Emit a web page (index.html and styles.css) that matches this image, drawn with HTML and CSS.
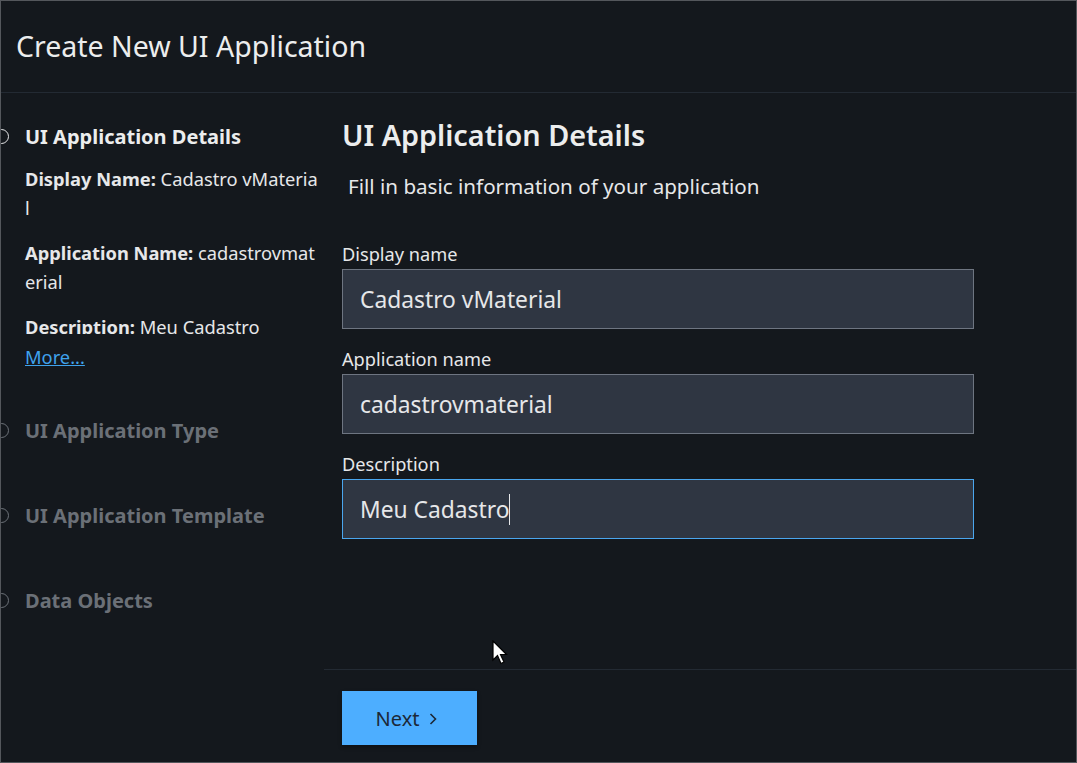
FILE: index.html
```html
<!DOCTYPE html>
<html lang="en">
<head>
    <meta charset="UTF-8">
    <title>Create New UI Application</title>
    <link rel="stylesheet" href="styles.css">
</head>
<body>
    <div class="dialog">
        <header class="dialog-header">
            <h1 class="dialog-title">Create New UI Application</h1>
        </header>

        <div class="dialog-body">
            <aside class="steps">
                <div class="step active">
                    <div class="step-head">
                        <span class="step-ring"></span>
                        <span class="step-title">UI Application Details</span>
                    </div>
                    <div class="step-summary">
                        <p class="summary-item"><b>Display Name:</b> Cadastro vMaterial</p>
                        <p class="summary-item"><b>Application Name:</b> cadastrovmaterial</p>
                        <p class="summary-item clipped"><b>Description:</b> Meu Cadastro</p>
                    </div>
                    <a href="#" class="more-link">More...</a>
                </div>
                <div class="step">
                    <div class="step-head">
                        <span class="step-ring"></span>
                        <span class="step-title">UI Application Type</span>
                    </div>
                </div>
                <div class="step">
                    <div class="step-head">
                        <span class="step-ring"></span>
                        <span class="step-title">UI Application Template</span>
                    </div>
                </div>
                <div class="step">
                    <div class="step-head">
                        <span class="step-ring"></span>
                        <span class="step-title">Data Objects</span>
                    </div>
                </div>
            </aside>

            <main class="panel">
                <div class="panel-content">
                    <h2 class="panel-title">UI Application Details</h2>
                    <p class="panel-subtitle">Fill in basic information of your application</p>

                    <div class="field">
                        <label class="field-label">Display name</label>
                        <div class="field-box">Cadastro vMaterial</div>
                    </div>
                    <div class="field">
                        <label class="field-label">Application name</label>
                        <div class="field-box">cadastrovmaterial</div>
                    </div>
                    <div class="field">
                        <label class="field-label">Description</label>
                        <div class="field-box focused">Meu Cadastro<span class="caret"></span></div>
                    </div>
                </div>

                <footer class="panel-footer">
                    <button class="next-btn">
                        <span>Next</span>
                        <svg class="chevron" width="8" height="12" viewBox="0 0 8 12">
                            <path d="M1.5 1 L6.5 6 L1.5 11" fill="none" stroke="currentColor" stroke-width="1.6"/>
                        </svg>
                    </button>
                </footer>

                <!-- mouse pointer from the screenshot -->
                <svg class="pointer" width="18" height="26" viewBox="0 0 18 26">
                    <path d="M1 1 L1 20 L5.5 15.5 L9 23.5 L12 22 L8.5 14.5 L14.5 14.5 Z" fill="#fff" stroke="#000" stroke-width="1.2"/>
                </svg>
            </main>
        </div>
    </div>
</body>
</html>
```

FILE: styles.css
```css
* {
    margin: 0;
    padding: 0;
    box-sizing: border-box;
}

body {
    font-family: 'Noto Sans', 'Open Sans', sans-serif;
    background: #14181d;
    color: #e6e7e9;
    width: 1077px;
    height: 763px;
    overflow: hidden;
}

.dialog {
    height: 763px;
    border: 1px solid #54575c;
    background: #14181d;
    display: flex;
    flex-direction: column;
}

.dialog-header {
    height: 92px;
    border-bottom: 1px solid #232a33;
    display: flex;
    align-items: center;
    padding-left: 15px;
    padding-bottom: 2px;
}

.dialog-title {
    font-size: 28.5px;
    font-weight: 400;
    color: #eceded;
}

.dialog-body {
    flex: 1;
    display: flex;
    overflow: hidden;
}

/* left step list */
.steps {
    width: 323px;
    padding-top: 28px;
    overflow: hidden;
}

.step {
    margin-bottom: 55px;
}

.step-head {
    display: flex;
    align-items: center;
    gap: 16px;
    height: 30px;
}

.step-ring {
    width: 15px;
    height: 15px;
    border: 1px solid #6d7279;
    border-radius: 50%;
    margin-left: -7px;
    flex-shrink: 0;
}

.step-title {
    font-size: 20px;
    font-weight: 700;
    color: #6b7077;
    white-space: nowrap;
}

.step.active .step-title {
    color: #eceded;
}

.step.active .step-ring {
    border-color: #e6e7e9;
}

.step-summary {
    padding-left: 24px;
    width: 320px;
    margin-top: 13px;
}

.summary-item {
    font-size: 18.3px;
    line-height: 29px;
    word-break: break-all;
    margin-bottom: 16px;
    color: #e6e7e9;
}

.summary-item b {
    font-weight: 700;
}

.summary-item.clipped {
    height: 22px;
    overflow: hidden;
    margin-bottom: 0;
}

.more-link {
    display: block;
    margin-left: 24px;
    margin-top: 11px;
    font-size: 18.3px;
    line-height: 23px;
    color: #3fa2ec;
}

.step.active {
    margin-bottom: 47px;
}

/* right form panel */
.panel {
    flex: 1;
    display: flex;
    flex-direction: column;
    position: relative;
}

.panel-content {
    flex: 1;
    padding: 25px 0 0 18px;
}

.panel-title {
    font-size: 28.8px;
    font-weight: 600;
    line-height: 34px;
    color: #eceded;
}

.panel-subtitle {
    font-size: 20.6px;
    line-height: 26px;
    margin: 21px 0 43px 6px;
    color: #e6e7e9;
}

.field {
    margin-bottom: 18px;
}

.field-label {
    display: block;
    font-size: 18.2px;
    line-height: 24px;
    margin-bottom: 3px;
    color: #e6e7e9;
}

.field-box {
    width: 632px;
    height: 60px;
    background: #2f3642;
    border: 1px solid #6e7581;
    padding-left: 17px;
    display: flex;
    align-items: center;
    font-size: 22.8px;
    color: #e6e7e9;
}

.field-box.focused {
    border-color: #4aa6ee;
}

.caret {
    display: inline-block;
    width: 1px;
    height: 31px;
    background: #e6e7e9;
}

.panel-footer {
    height: 93px;
    border-top: 1px solid #232a33;
    padding: 21px 18px;
}

.next-btn {
    width: 135px;
    height: 54px;
    background: #4daeff;
    border: none;
    font-family: inherit;
    font-size: 20px;
    color: #1c2836;
    display: flex;
    align-items: center;
    justify-content: center;
    gap: 10px;
    padding-right: 6px;
    box-shadow: 0 2px 4px rgba(0, 0, 0, 0.3);
}

.chevron {
    margin-top: 1px;
}

.pointer {
    position: absolute;
    left: 168px;
    top: 547px;
}
```
